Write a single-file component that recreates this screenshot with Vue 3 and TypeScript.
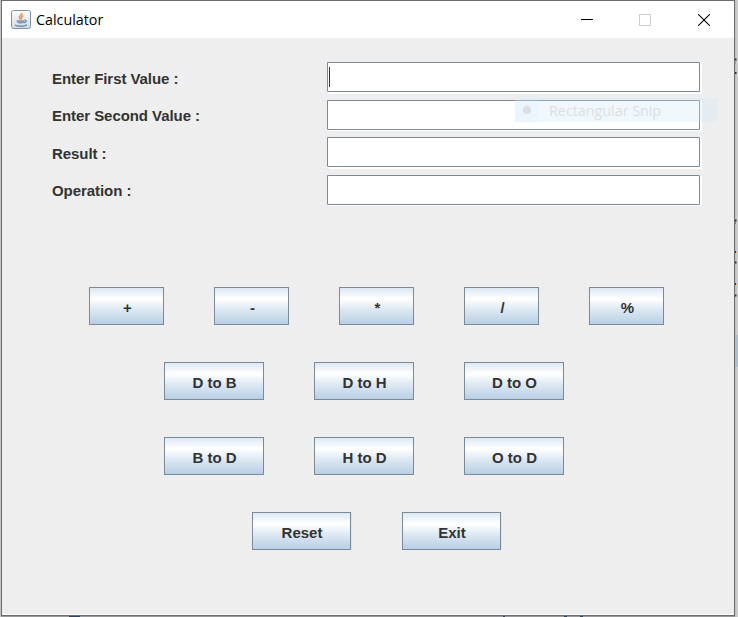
<script setup lang="ts">
import { ref } from 'vue'

interface Field {
  label: string
  active?: boolean
}

const fields: Field[] = [
  { label: 'Enter First Value :', active: true },
  { label: 'Enter Second Value :' },
  { label: 'Result :' },
  { label: 'Operation :' },
]
const values = ref<string[]>(fields.map(() => ''))
const operators: string[] = ['+', '-', '*', '/', '%']
const fromDecimal: string[] = ['D to B', 'D to H', 'D to O']
const toDecimal: string[] = ['B to D', 'H to D', 'O to D']
const actions: string[] = ['Reset', 'Exit']
</script>

<template>
  <div class="desktop">
    <main class="window">
      <header class="titlebar">
        <svg class="app-icon" width="20" height="20" viewBox="0 0 20 20">
          <defs>
            <linearGradient id="tile" x1="0" y1="0" x2="0" y2="1">
              <stop offset="0" stop-color="#fdfdfd" />
              <stop offset="1" stop-color="#d3dae1" />
            </linearGradient>
          </defs>
          <rect x=".5" y=".5" width="19" height="18" rx="2" fill="url(#tile)" stroke="#7f93a5" />
          <path d="M10.800 3c.7 2-3.300 2.700-2.300 5 .3.8.9 1.200 1.200 1.500M12.300 5.500c-2 1-2.500 2.200-1.300 3.500" fill="none" stroke="#e88f4a" stroke-width="1.500" />
          <path d="M5.500 10.300h8c0 2-1 3.200-2.500 3.200H8c-1.500 0-2.500-1.200-2.500-3.200z" fill="#7f9db6" />
          <path d="M13.500 10.300c2.500-.4 2 2-.8 2.500M4 15.200c2.500 1.500 9.500 1.400 12-.3" fill="none" stroke="#6b8eab" stroke-width="1.400" />
        </svg>
        <h1 class="title">Calculator</h1>
        <div class="controls">
          <svg width="12" height="12"><path d="M0 5.500H12" stroke="#000" /></svg>
          <svg width="12" height="12"><rect x=".5" y=".5" width="11" height="11" fill="none" stroke="#ccc" /></svg>
          <svg class="close" width="12" height="12"><path d="M.3.3l11.400 11.400M11.700.3L.3 11.700" stroke="#000" stroke-width="1.100" /></svg>
        </div>
      </header>

      <section class="form">
        <label v-for="(field, i) in fields" :key="field.label" class="row">
          <span class="caption">{{ field.label }}</span>
          <span class="field" :class="{ active: field.active }">
            <input v-model="values[i]" type="text" />
          </span>
        </label>
      </section>

      <section class="keys">
        <div class="key-row operators">
          <button v-for="k in operators" :key="k">{{ k }}</button>
        </div>
        <div class="key-row conversions">
          <button v-for="k in fromDecimal" :key="k">{{ k }}</button>
        </div>
        <div class="key-row conversions">
          <button v-for="k in toDecimal" :key="k">{{ k }}</button>
        </div>
        <div class="key-row actions">
          <button v-for="k in actions" :key="k">{{ k }}</button>
        </div>
      </section>
    </main>

    <div class="snip"><span class="dot"></span><span class="snip-text">Rectangular Snip</span></div>
    <svg class="behind" width="738" height="617">
      <path d="M735 59.500h1.500M735 73h1.500M735 220.500h1.500M735 252h1M735 262.500h1.500M735 284h1M735 295.500h1.500" stroke="#1f2f49" stroke-width="2" />
      <path d="M735 61v3M735.500 222v2" stroke="#6d86a5" />
      <path d="M737.500 251v2M737.500 283v2" stroke="#e0bd68" />
      <rect x="735" y="335" width="3" height="32" fill="#afbfcf" />
      <path d="M69 616.500h11M503 616.500h2M564 616.500h3M580 616.500h3" stroke="#31455c" />
    </svg>
  </div>
</template>

<style>
body {
  margin: 0;
  overflow: hidden;
}
</style>

<style scoped>
.desktop {
  position: relative;
  width: 738px;
  height: 617px;
  padding-left: 1px;
  box-sizing: border-box;
  background: linear-gradient(90deg, #c4c4c4 735px, #bebebe 735px, #d4d4d4 738px);
  font-family: "Liberation Sans", Arial, sans-serif;
}
.window {
  width: 734px;
  height: 616px;
  box-sizing: border-box;
  border: 1px solid #6b6b6b;
  background: #eee;
  box-shadow: inset 0 -1px #fff, 0 1px #999;
}
.titlebar {
  display: flex;
  align-items: center;
  height: 37px;
  padding-left: 9px;
  background: #fff;
}
.app-icon {
  flex: none;
}
.title {
  flex: 1;
  margin: 0 0 0 5px;
  font: 400 14.300px/20px "Open Sans", "Noto Sans", sans-serif;
  color: #000;
}
.controls {
  display: flex;
  gap: 46px;
  padding-right: 24px;
}
.controls svg {
  display: block;
}
.controls .close {
  margin-left: 1px;
}
.form {
  display: grid;
  grid-template-rows: 38px 37px 38px 37px;
  padding: 24px 0 0 50px;
}
.row {
  display: flex;
  align-items: flex-start;
}
.caption {
  width: 275px;
  font-size: 15px;
  font-weight: 700;
  line-height: 34px;
  letter-spacing: -0.060px;
  color: #333;
}
.row:nth-child(even) .caption {
  line-height: 32px;
}
.field {
  display: flex;
  align-items: center;
  width: 373px;
  height: 30px;
  box-sizing: border-box;
  border: 1px solid #7a8a99;
  border-top-right-radius: 1px;
  border-bottom-left-radius: 1px;
  background: #fff;
  box-shadow: 1px 1px #fff, 2px 2px #fff;
}
.row:nth-child(even) .field {
  box-shadow: 1px 1px #fff, 2px 1px #fff;
}
.field.active::before {
  content: "";
  width: 1px;
  height: 20px;
  margin-left: 1px;
  background: #333;
}
.field input {
  flex: 1;
  min-width: 0;
  height: 20px;
  border: 0;
  padding: 0 2px;
  outline: 0;
  background: transparent;
  font: 15px "Liberation Sans", Arial, sans-serif;
}
.keys {
  display: grid;
  gap: 37px;
  padding-top: 75px;
}
.key-row {
  display: flex;
  gap: 50px;
}
.key-row button {
  width: 100px;
  height: 38px;
  padding: 2px 0 0 1px;
  border: 1px solid #7a8a99;
  border-radius: 0;
  background: linear-gradient(#dde8f3, #fff 30%, #dde8f3 60%, #b8cfe5);
  font: 700 15px "Liberation Sans", Arial, sans-serif;
  color: #333;
}
.operators {
  padding-left: 87px;
}
.key-row.operators button {
  width: 75px;
  padding-left: 2px;
}
.conversions {
  padding-left: 162px;
}
.actions {
  padding-left: 250px;
  gap: 51px;
}
.actions button {
  width: 99px;
  box-shadow: 1px 0 #dfe5eb;
}
.snip {
  position: absolute;
  left: 515px;
  top: 98px;
  display: flex;
  align-items: center;
  width: 202px;
  height: 24px;
  background: linear-gradient(90deg, rgba(205, 231, 250, .4) 24px, rgba(205, 231, 250, .3) 24px);
  pointer-events: none;
}
.dot {
  width: 8px;
  height: 8px;
  margin-left: 8px;
  border-radius: 50%;
  background: #dedede;
}
.snip-text {
  margin-left: 18px;
  padding-top: 2px;
  font: 14.500px/24px "Open Sans", "Noto Sans", sans-serif;
  letter-spacing: -0.100px;
  white-space: nowrap;
  color: #dedede;
}
.behind {
  position: absolute;
  left: 0;
  top: 0;
  pointer-events: none;
}
</style>
